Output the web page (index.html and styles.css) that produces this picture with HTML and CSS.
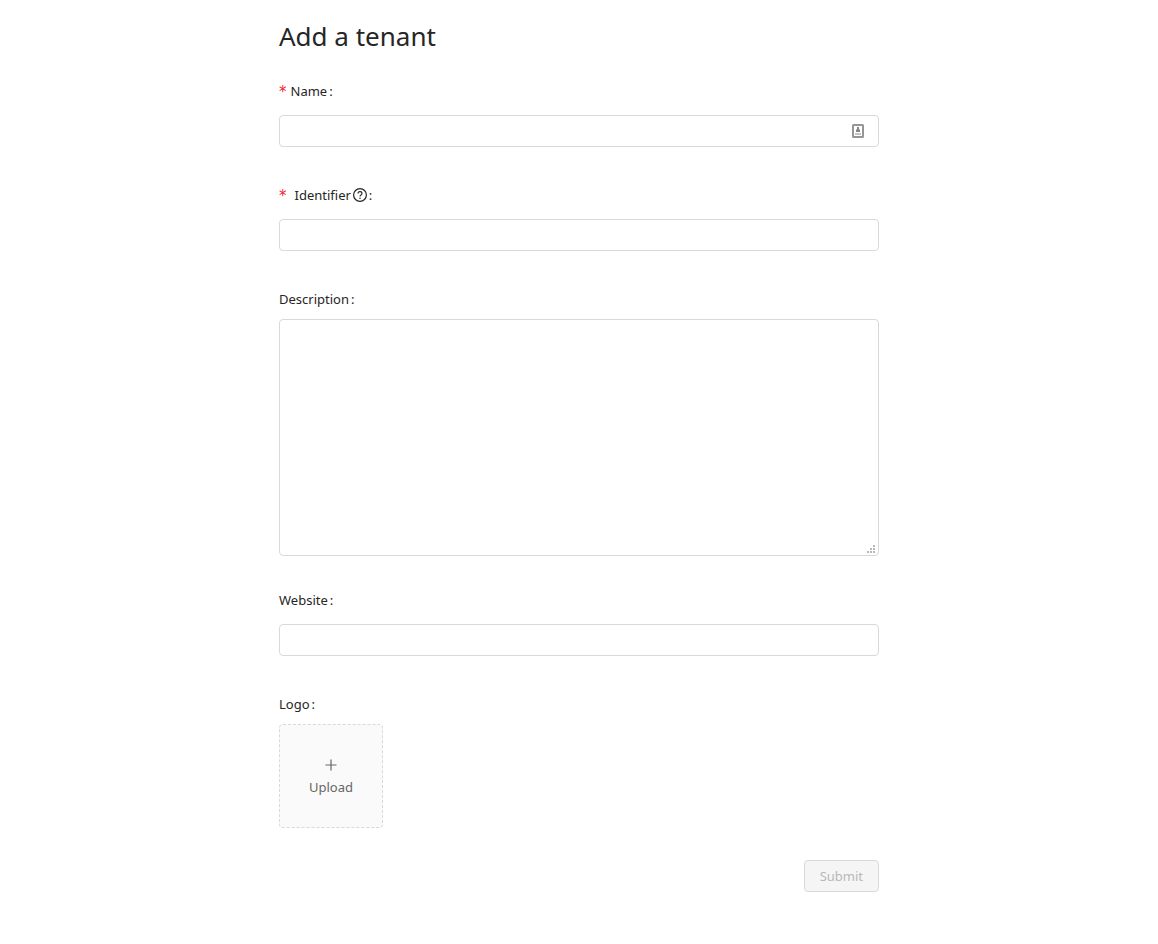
FILE: index.html
```html
<!DOCTYPE html>
<html lang="en">
<head>
    <meta charset="UTF-8">
    <meta name="viewport" content="width=device-width, initial-scale=1.0">
    <title>Add a tenant</title>
    <link rel="stylesheet" href="styles.css">
</head>
<body>
    <main class="container">
        <h1>Add a tenant</h1>
        <form action="#" method="POST">
            <div class="form-group">
                <label for="name"><span class="required">*</span>Name<span class="colon">:</span></label>
                <div class="control">
                    <input type="text" id="name" name="name" required>
                    <svg class="autofill" width="12" height="14" viewBox="0 0 12 14" aria-hidden="true">
                        <rect x="1" y="1" width="10" height="12" rx=".5" fill="#fff" stroke="#959595" stroke-width="2"/>
                        <path d="M5 3h2v2l1 1v2H4V6l1-1z" fill="#858585"/>
                        <path d="M3 9h6v2H3z" fill="#c4c4c4"/>
                    </svg>
                </div>
            </div>
            <div class="form-group">
                <label for="identifier"><span class="required wide">*</span>Identifier
                    <svg class="help" width="14" height="14" viewBox="0 0 14 14" aria-hidden="true">
                        <circle cx="7" cy="7" r="6.4" fill="none" stroke="#262626" stroke-width="1.2"/>
                        <path d="M5 5.6C5 4.4 5.8 3.6 7 3.6s2 .8 2 1.9C9 7 7 6.9 7 8.5" fill="none" stroke="#262626" stroke-width="1.1"/>
                        <circle cx="7" cy="10.2" r=".75" fill="#262626"/>
                    </svg><span class="colon">:</span></label>
                <div class="control">
                    <input type="text" id="identifier" name="identifier" required>
                </div>
            </div>
            <div class="form-group">
                <label for="description">Description<span class="colon">:</span></label>
                <div class="textarea-wrap">
                    <textarea id="description" name="description"></textarea>
                    <svg class="grip" width="8" height="8" viewBox="0 0 8 8" aria-hidden="true">
                        <path d="M6 0h2v2H6zM3 3h2v2H3zM6 3h2v2H6zM0 6h2v2H0zM3 6h2v2H3zM6 6h2v2H6z" fill="#b8b8b8"/>
                    </svg>
                </div>
            </div>
            <div class="form-group">
                <label for="website">Website<span class="colon">:</span></label>
                <div class="control">
                    <input type="text" id="website" name="website">
                </div>
            </div>
            <div class="form-group">
                <label for="logo">Logo<span class="colon">:</span></label>
                <button type="button" class="upload" id="logo">
                    <svg width="14" height="14" viewBox="0 0 14 14" aria-hidden="true">
                        <path d="M7 1.5v11M1.5 7h11" stroke="#666" stroke-width="1.2"/>
                    </svg>
                    <span>Upload</span>
                </button>
            </div>
            <div class="actions">
                <button type="submit" class="submit" disabled>Submit</button>
            </div>
        </form>
    </main>
</body>
</html>
```
FILE: styles.css
```css
* {
    box-sizing: border-box;
}
body {
    font-family: "Noto Sans", "Open Sans", sans-serif;
    font-size: 13px;
    line-height: 22px;
    color: #262626;
    margin: 0;
    background: #fff;
}
.container {
    max-width: 600px;
    margin: 0 auto;
    padding: 16px 0;
}
h1 {
    font-size: 26px;
    font-weight: 400;
    line-height: 40px;
    margin: 0 0 15px;
}
.form-group {
    margin-bottom: 24px;
}
.form-group label {
    display: flex;
    align-items: center;
    height: 40px;
}
.required {
    font-family: "DejaVu Sans", sans-serif;
    font-size: 15px;
    padding-top: 2px;
    color: #f5222d;
    margin-right: 4px;
}
.required.wide {
    margin-right: 8px;
}
.colon {
    margin-left: 2px;
}
.help {
    margin-left: 2px;
}
.control {
    position: relative;
    display: flex;
    align-items: center;
    height: 40px;
}
input, textarea {
    display: block;
    width: 100%;
    font: inherit;
    color: inherit;
    background: #fff;
    border: 1px solid #d9d9d9;
    border-radius: 4px;
    padding: 4px 12px;
    outline: none;
}
input {
    height: 32px;
}
input:focus, textarea:focus {
    border-color: #40a9ff;
}
.autofill {
    position: absolute;
    right: 15px;
}
.textarea-wrap {
    position: relative;
}
textarea {
    height: 237px;
    resize: none;
}
.grip {
    position: absolute;
    right: 4px;
    bottom: 3px;
}
.upload {
    display: flex;
    flex-direction: column;
    align-items: center;
    justify-content: center;
    gap: 4px;
    width: 104px;
    height: 104px;
    padding: 4px 0 0;
    font: inherit;
    color: #666;
    background: #fafafa;
    border: 1px dashed #d9d9d9;
    border-radius: 4px;
    cursor: pointer;
}
.actions {
    display: flex;
    justify-content: flex-end;
    margin-top: 32px;
}
.submit {
    height: 32px;
    padding: 0 15px;
    font: inherit;
    color: #b8b8b8;
    background: #f5f5f5;
    border: 1px solid #d9d9d9;
    border-radius: 4px;
    cursor: not-allowed;
}
```
